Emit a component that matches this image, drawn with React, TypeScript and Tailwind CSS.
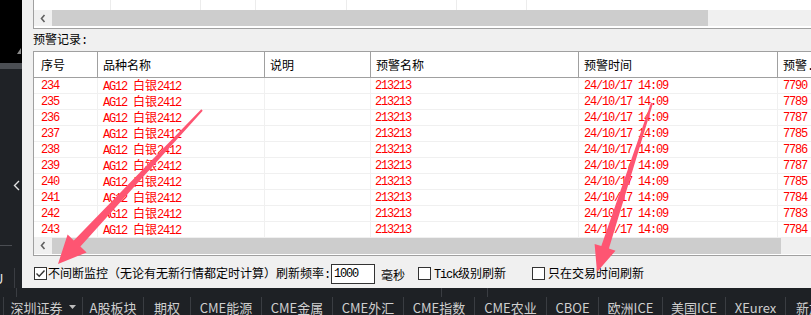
import React from 'react';

const CJK = "font-['Noto_Sans_CJK_SC',sans-serif]";
const MONO = "font-['Liberation_Mono',monospace] tracking-[-1.2px]";

// SimSun-like mix: ascii runs 6px wide, CJK 12px wide
function Txt({ s, className = '' }: { s: string; className?: string }) {
  const parts = s.split(/([\x20-\x7e]+)/).filter(Boolean);
  return (
    <span className={`whitespace-pre text-[12px] leading-[14px] ${className}`}>
      {parts.map((p, i) =>
        /^[\x20-\x7e]+$/.test(p) ? (
          <span key={i} className={MONO}>{p}</span>
        ) : (
          <span key={i} className={CJK}>{p}</span>
        ),
      )}
    </span>
  );
}

function Chevron({ dir }: { dir: 'left' | 'right' }) {
  return (
    <svg width="6" height="9" viewBox="0 0 6 9" fill="none" stroke="#606060" strokeWidth="1.6">
      {dir === 'left' ? <polyline points="4.5 1 1.5 4.5 4.5 8" /> : <polyline points="1.5 1 4.5 4.5 1.5 8" />}
    </svg>
  );
}

function Checkbox({ checked }: { checked?: boolean }) {
  return (
    <span className="w-[13px] h-[13px] shrink-0 border border-[#333] bg-white flex items-center justify-center">
      {checked && (
        <svg width="11" height="11" viewBox="0 0 11 11" fill="none" stroke="#333" strokeWidth="1.4">
          <polyline points="1.5 5.5 4.2 8.2 9.5 2.5" />
        </svg>
      )}
    </span>
  );
}

const rows: [number, number][] = [
  [234, 7790],
  [235, 7789],
  [236, 7787],
  [237, 7785],
  [238, 7786],
  [239, 7787],
  [240, 7785],
  [241, 7784],
  [242, 7783],
  [243, 7784],
];

const cols = 'grid grid-cols-[64px_167px_106px_208px_199px_80px]';
const tabs: [string, number][] = [
  ['A股板块', 61],
  ['期权', 47],
  ['CME能源', 71],
  ['CME金属', 71],
  ['CME外汇', 71],
  ['CME指数', 71],
  ['CME农业', 72],
  ['CBOE', 52],
  ['欧洲ICE', 64],
  ['美国ICE', 63],
  ['XEurex', 60],
  ['新加坡', 60],
];

function LeftStrip() {
  return (
    <div className="w-[22px] shrink-0 flex flex-col">
      <div className="h-[45px] bg-black" />
      <div className="h-[18px] bg-black flex justify-end items-start pt-[3px] pr-[1px]">
        <svg width="4" height="6" viewBox="0 0 4 6">
          <polygon points="4 0 4 6 0 6" fill="#8a8a8a" />
        </svg>
      </div>
      <div className="h-[6px] bg-[#4b4e53]" />
      <div className="flex-1 bg-[#1f2226] flex flex-col">
        <div className="mt-[111px] pl-[13px] h-[10px] flex items-center">
          <svg width="7" height="11" viewBox="0 0 7 11" fill="none" stroke="#e0e0e0" strokeWidth="1.4">
            <polyline points="6 1 1.5 5.5 6 10" />
          </svg>
        </div>
        <div className="mt-[55px] h-px w-[12px] bg-[#4a4d52]" />
        <div className="mt-[22px] h-[20px] flex items-center overflow-hidden">
          <span className={`-ml-[6px] text-[13px] leading-none text-[#e8e8e8] ${CJK}`}>U</span>
          <div className="ml-[11px] w-px h-[20px] bg-[#3a3d42]" />
        </div>
      </div>
    </div>
  );
}

function Dialog() {
  return (
    <div className="flex-1 bg-[#f0f0f0] overflow-hidden pl-[11px] flex flex-col">
      {/* upper list, scrolled out */}
      <div className="w-[791px] h-[29px] border-l border-b border-[#a0a0a0] bg-white flex flex-col">
        <div className="h-[10px] flex">
          {[77, 90, 55, 91, 110, 70].map((w, i) => (
            <div key={i} style={{ width: w }} className="border-r border-[#ececec] shrink-0" />
          ))}
        </div>
        <div className="h-[16px] bg-[#f0f0f0] flex">
          <div className="w-[18px] flex items-center justify-center">
            <Chevron dir="left" />
          </div>
          <div className="w-[656px] bg-[#cdcdcd]" />
          <div className="flex-1" />
          <div className="w-[17px] flex items-center justify-center">
            <Chevron dir="right" />
          </div>
        </div>
      </div>

      <div className="h-[22px] flex items-center pt-[1px] leading-none">
        <Txt s="预警记录:" className="text-black" />
      </div>

      {/* alert records */}
      <div className="w-[800px] h-[206px] border border-[#a0a0a0] bg-white flex flex-col">
        <div className={`${cols} h-[26px] border-b border-[#a0a0a0]`}>
          {['序号', '品种名称', '说明', '预警名称', '预警时间', '预警...'].map((h, i) => (
            <div
              key={h}
              className={`flex items-center pt-[3px] ${i === 0 ? 'pl-[7px]' : 'pl-[5px]'} ${
                i < 5 ? 'border-r border-[#a0a0a0]' : ''
              } overflow-hidden`}
            >
              <Txt s={h} className="text-black" />
            </div>
          ))}
        </div>
        {rows.map(([n, v]) => (
          <div key={n} className={`${cols} h-[16px] border-b border-[#f0f0f0] text-[#ff0000]`}>
            <div className="pl-[7px] border-r border-[#f0f0f0] flex items-center">
              <Txt s={String(n)} />
            </div>
            <div className="pl-[5px] border-r border-[#f0f0f0] flex items-center">
              <Txt s="AG12 白银2412" />
            </div>
            <div className="border-r border-[#f0f0f0]" />
            <div className="pl-[4px] border-r border-[#f0f0f0] flex items-center">
              <Txt s="213213" />
            </div>
            <div className="pl-[5px] border-r border-[#f0f0f0] flex items-center">
              <Txt s="24/10/17 14:09" />
            </div>
            <div className="pl-[5px] flex items-center">
              <Txt s={String(v)} />
            </div>
          </div>
        ))}
        <div className="h-[16px] bg-[#f0f0f0] flex">
          <div className="w-[18px] flex items-center justify-center">
            <Chevron dir="left" />
          </div>
          <div className="w-[729px] bg-[#cdcdcd]" />
        </div>
      </div>

      {/* options */}
      <div className="h-[32px] pt-[3px] flex items-center ml-px text-black">
        <div className="w-[297px] flex items-center gap-[1px] shrink-0">
          <Checkbox checked />
          <Txt s="不间断监控（无论有无新行情都定时计算）刷新频率:" />
        </div>
        <div className="w-[44px] h-[20px] shrink-0 border border-[#333] bg-white flex items-center pl-[2px]">
          <Txt s="1000" />
        </div>
        <div className="ml-[6px]">
          <Txt s="毫秒" />
        </div>
        <div className="ml-[13px] flex items-center gap-[3px]">
          <Checkbox />
          <Txt s="Tick级别刷新" />
        </div>
        <div className="ml-[26px] flex items-center gap-[3px]">
          <Checkbox />
          <Txt s="只在交易时间刷新" />
        </div>
      </div>
    </div>
  );
}

function BottomBar() {
  return (
    <div className="h-[27px] bg-[#1e2125] flex flex-col">
      <div className="h-[9px] flex">
        <div className="w-[16px]" />
        <div className="w-px bg-[#3a3d42]" />
        <div className="w-[424px]" />
        <div className="w-px bg-[#3a3d42]" />
        <div className="w-[45px]" />
        <div className="w-px bg-[#3a3d42]" />
      </div>
      <div className={`h-[18px] flex pl-[3px] text-[13px] text-[#cfcfcf] ${CJK}`}>
        <div className="w-[79px] shrink-0 border-l border-[#3a3d42] flex items-center justify-center gap-[6px] pt-[2px]">
          <span className="leading-none">深圳证券</span>
          <svg width="7" height="4" viewBox="0 0 7 4">
            <polygon points="0 0 7 0 3.5 4" fill="#bdbdbd" />
          </svg>
        </div>
        {tabs.map(([t, w]) => (
          <div
            key={t}
            style={{ width: w }}
            className="shrink-0 border-l border-[#3a3d42] flex items-center justify-center pt-[2px] whitespace-nowrap"
          >
            <span className="leading-none">{t}</span>
          </div>
        ))}
      </div>
    </div>
  );
}

function Arrows() {
  return (
    <svg className="absolute inset-0 pointer-events-none" width="811" height="315" viewBox="0 0 811 315">
      <polygon
        points="202.7,110.7 80.4,246.6 86.6,252.4 58,264 67.6,234.6 73.8,240.4 201.3,109.3"
        fill="#fe5572"
      />
      <polygon
        points="653,103.3 608.9,248.5 615.5,250.7 597,272 594.6,243.9 601.3,246.1 651,102.7"
        fill="#fe5572"
      />
    </svg>
  );
}

export default function App() {
  return (
    <div className="relative w-[811px] h-[315px] overflow-hidden bg-[#1e2125] flex flex-col">
      <div className="flex h-[288px] shrink-0">
        <LeftStrip />
        <Dialog />
      </div>
      <BottomBar />
      <Arrows />
    </div>
  );
}
